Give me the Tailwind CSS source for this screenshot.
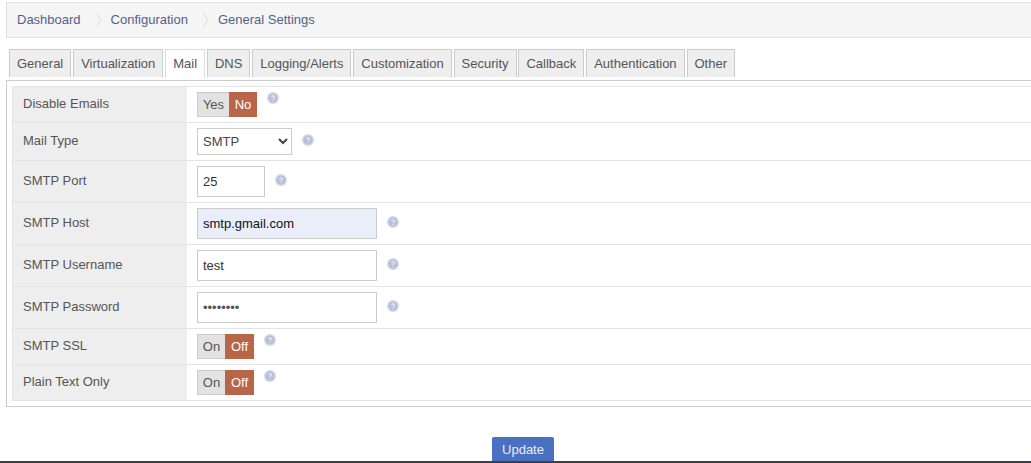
<!DOCTYPE html>
<html lang="en">
<head>
  <meta charset="UTF-8" />
  <title>General Settings</title>
  <script src="https://cdn.jsdelivr.net/npm/@tailwindcss/browser@4"></script>
</head>
<body class="h-[463px] overflow-hidden bg-white font-['Liberation_Sans',Arial,sans-serif] text-[13px] text-[#555]">
  <div class="flex h-[463px] flex-col overflow-hidden">
    <main class="ml-[6px] h-[461px] w-[1034px] shrink-0 overflow-hidden pt-[2px]">

      <!-- breadcrumb -->
      <nav class="flex h-[36px] items-center border border-[#e0e0e0] bg-[#f5f5f5] pl-[10px] text-[#50628c]">
        <a>Dashboard</a>
        <svg class="mr-[10px] ml-[15px] h-[16px] w-[5px]" viewBox="0 0 5 16" fill="none" stroke="#dcdcdc"><path d="M0.5 1 L4.5 8 L0.5 15" /></svg>
        <a>Configuration</a>
        <svg class="mr-[10px] ml-[15px] h-[16px] w-[5px]" viewBox="0 0 5 16" fill="none" stroke="#dcdcdc"><path d="M0.5 1 L4.5 8 L0.5 15" /></svg>
        <a>General Settings</a>
      </nav>

      <!-- tabs -->
      <ul class="mt-[11px] flex h-[29px] gap-[1.9px] pl-[3px]">
        <li class="h-[28px] border border-b-0 border-[#ccc] bg-[#eee] px-[7px] leading-[27px]">General</li>
        <li class="h-[28px] border border-b-0 border-[#ccc] bg-[#eee] px-[7px] leading-[27px]">Virtualization</li>
        <li class="h-[29px] border border-b-0 border-[#ddd] bg-white px-[7px] leading-[27px]">Mail</li>
        <li class="h-[28px] border border-b-0 border-[#ccc] bg-[#eee] px-[7px] leading-[27px]">DNS</li>
        <li class="h-[28px] border border-b-0 border-[#ccc] bg-[#eee] px-[7px] leading-[27px]">Logging/Alerts</li>
        <li class="h-[28px] border border-b-0 border-[#ccc] bg-[#eee] px-[7px] leading-[27px]">Customization</li>
        <li class="h-[28px] border border-b-0 border-[#ccc] bg-[#eee] px-[7px] leading-[27px]">Security</li>
        <li class="h-[28px] border border-b-0 border-[#ccc] bg-[#eee] px-[7px] leading-[27px]">Callback</li>
        <li class="h-[28px] border border-b-0 border-[#ccc] bg-[#eee] px-[7px] leading-[27px]">Authentication</li>
        <li class="h-[28px] border border-b-0 border-[#ccc] bg-[#eee] px-[7px] leading-[27px]">Other</li>
      </ul>

      <!-- settings panel -->
      <section class="mt-[2px] border border-[#ccc] p-[5px]">
        <div class="border-t border-l border-[#e4e4e4]">

          <div class="flex border-b border-[#e4e4e4]">
            <label class="flex w-[174px] shrink-0 items-center bg-[#eee] pb-[2px] pl-[10px]">Disable Emails</label>
            <div class="flex items-start py-[5px] pl-[10px]">
              <div class="flex h-[25px] leading-[25px]">
                <span class="w-[32px] border border-r-0 border-[#ccc] bg-[#e2e2e2] text-center leading-[24px]">Yes</span>
                <span class="w-[28px] bg-[#b9654a] text-center text-white">No</span>
              </div>
              <svg class="ml-[10px] h-[12px] w-[12px]" viewBox="0 0 12 12"><circle cx="6" cy="6" r="6" fill="#d3d9e8" /><circle cx="6" cy="6" r="4.6" fill="#b7c0d8" /><path d="M4.7 4.8 C4.7 3.3 7.4 3.3 7.4 4.9 C7.4 5.9 6.1 5.9 6.1 7.1" fill="none" stroke="#eef0f7" stroke-width="1.1" /><circle cx="6.1" cy="8.6" r="0.7" fill="#eef0f7" /></svg>
            </div>
          </div>

          <div class="flex border-b border-[#e4e4e4]">
            <label class="flex w-[174px] shrink-0 items-center bg-[#eee] pb-[2px] pl-[10px]">Mail Type</label>
            <div class="flex items-start py-[5px] pl-[10px]">
              <select class="h-[27px] w-[95px] border border-[#ccc] bg-white pl-[1px] text-[13px] text-[#444]">
                <option>SMTP</option>
              </select>
              <svg class="mt-[6px] ml-[10px] h-[12px] w-[12px]" viewBox="0 0 12 12"><circle cx="6" cy="6" r="6" fill="#d3d9e8" /><circle cx="6" cy="6" r="4.6" fill="#b7c0d8" /><path d="M4.7 4.8 C4.7 3.3 7.4 3.3 7.4 4.9 C7.4 5.9 6.1 5.9 6.1 7.1" fill="none" stroke="#eef0f7" stroke-width="1.1" /><circle cx="6.1" cy="8.6" r="0.7" fill="#eef0f7" /></svg>
            </div>
          </div>

          <div class="flex border-b border-[#e4e4e4]">
            <label class="flex w-[174px] shrink-0 items-center bg-[#eee] pb-[2px] pl-[10px]">SMTP Port</label>
            <div class="flex items-start py-[5px] pl-[10px]">
              <input type="text" value="25" class="h-[31px] w-[68px] border border-[#ccc] px-[5px] text-[13px] text-[#333]" />
              <svg class="mt-[8px] ml-[10px] h-[12px] w-[12px]" viewBox="0 0 12 12"><circle cx="6" cy="6" r="6" fill="#d3d9e8" /><circle cx="6" cy="6" r="4.6" fill="#b7c0d8" /><path d="M4.7 4.8 C4.7 3.3 7.4 3.3 7.4 4.9 C7.4 5.9 6.1 5.9 6.1 7.1" fill="none" stroke="#eef0f7" stroke-width="1.1" /><circle cx="6.1" cy="8.6" r="0.7" fill="#eef0f7" /></svg>
            </div>
          </div>

          <div class="flex border-b border-[#e4e4e4]">
            <label class="flex w-[174px] shrink-0 items-center bg-[#eee] pb-[2px] pl-[10px]">SMTP Host</label>
            <div class="flex items-start py-[5px] pl-[10px]">
              <input type="text" value="smtp.gmail.com" class="h-[31px] w-[180px] border border-[#ccc] bg-[#e9eefa] px-[5px] text-[13px] text-[#111]" />
              <svg class="mt-[8px] ml-[10px] h-[12px] w-[12px]" viewBox="0 0 12 12"><circle cx="6" cy="6" r="6" fill="#d3d9e8" /><circle cx="6" cy="6" r="4.6" fill="#b7c0d8" /><path d="M4.7 4.8 C4.7 3.3 7.4 3.3 7.4 4.9 C7.4 5.9 6.1 5.9 6.1 7.1" fill="none" stroke="#eef0f7" stroke-width="1.1" /><circle cx="6.1" cy="8.6" r="0.7" fill="#eef0f7" /></svg>
            </div>
          </div>

          <div class="flex border-b border-[#e4e4e4]">
            <label class="flex w-[174px] shrink-0 items-center bg-[#eee] pb-[2px] pl-[10px]">SMTP Username</label>
            <div class="flex items-start py-[5px] pl-[10px]">
              <input type="text" value="test" class="h-[31px] w-[180px] border border-[#ccc] px-[5px] text-[13px] text-[#333]" />
              <svg class="mt-[8px] ml-[10px] h-[12px] w-[12px]" viewBox="0 0 12 12"><circle cx="6" cy="6" r="6" fill="#d3d9e8" /><circle cx="6" cy="6" r="4.6" fill="#b7c0d8" /><path d="M4.7 4.8 C4.7 3.3 7.4 3.3 7.4 4.9 C7.4 5.9 6.1 5.9 6.1 7.1" fill="none" stroke="#eef0f7" stroke-width="1.1" /><circle cx="6.1" cy="8.6" r="0.7" fill="#eef0f7" /></svg>
            </div>
          </div>

          <div class="flex border-b border-[#e4e4e4]">
            <label class="flex w-[174px] shrink-0 items-center bg-[#eee] pb-[2px] pl-[10px]">SMTP Password</label>
            <div class="flex items-start py-[5px] pl-[10px]">
              <input type="password" value="password" class="h-[31px] w-[180px] border border-[#ccc] px-[5px] text-[13px] text-[#555]" />
              <svg class="mt-[8px] ml-[10px] h-[12px] w-[12px]" viewBox="0 0 12 12"><circle cx="6" cy="6" r="6" fill="#d3d9e8" /><circle cx="6" cy="6" r="4.6" fill="#b7c0d8" /><path d="M4.7 4.8 C4.7 3.3 7.4 3.3 7.4 4.9 C7.4 5.9 6.1 5.9 6.1 7.1" fill="none" stroke="#eef0f7" stroke-width="1.1" /><circle cx="6.1" cy="8.6" r="0.7" fill="#eef0f7" /></svg>
            </div>
          </div>

          <div class="flex border-b border-[#e4e4e4]">
            <label class="flex w-[174px] shrink-0 items-center bg-[#eee] pb-[2px] pl-[10px]">SMTP SSL</label>
            <div class="flex items-start py-[5px] pl-[10px]">
              <div class="flex h-[25px] leading-[25px]">
                <span class="w-[28px] border border-r-0 border-[#ccc] bg-[#e2e2e2] text-center leading-[24px]">On</span>
                <span class="w-[29px] bg-[#b9654a] text-center text-white">Off</span>
              </div>
              <svg class="ml-[10px] h-[12px] w-[12px]" viewBox="0 0 12 12"><circle cx="6" cy="6" r="6" fill="#d3d9e8" /><circle cx="6" cy="6" r="4.6" fill="#b7c0d8" /><path d="M4.7 4.8 C4.7 3.3 7.4 3.3 7.4 4.9 C7.4 5.9 6.1 5.9 6.1 7.1" fill="none" stroke="#eef0f7" stroke-width="1.1" /><circle cx="6.1" cy="8.6" r="0.7" fill="#eef0f7" /></svg>
            </div>
          </div>

          <div class="flex border-b border-[#e4e4e4]">
            <label class="flex w-[174px] shrink-0 items-center bg-[#eee] pb-[2px] pl-[10px]">Plain Text Only</label>
            <div class="flex items-start py-[5px] pl-[10px]">
              <div class="flex h-[25px] leading-[25px]">
                <span class="w-[28px] border border-r-0 border-[#ccc] bg-[#e2e2e2] text-center leading-[24px]">On</span>
                <span class="w-[29px] bg-[#b9654a] text-center text-white">Off</span>
              </div>
              <svg class="ml-[10px] h-[12px] w-[12px]" viewBox="0 0 12 12"><circle cx="6" cy="6" r="6" fill="#d3d9e8" /><circle cx="6" cy="6" r="4.6" fill="#b7c0d8" /><path d="M4.7 4.8 C4.7 3.3 7.4 3.3 7.4 4.9 C7.4 5.9 6.1 5.9 6.1 7.1" fill="none" stroke="#eef0f7" stroke-width="1.1" /><circle cx="6.1" cy="8.6" r="0.7" fill="#eef0f7" /></svg>
            </div>
          </div>

        </div>
      </section>

      <div class="mt-[30px] flex justify-center">
        <button class="h-[30px] w-[62px] rounded-[2px] bg-[#4a70c2] pb-[4px] text-[13px] text-[#e8edf8]">Update</button>
      </div>
    </main>
    <div class="h-[2px] shrink-0 bg-[#3c4048]"></div>
  </div>
</body>
</html>
